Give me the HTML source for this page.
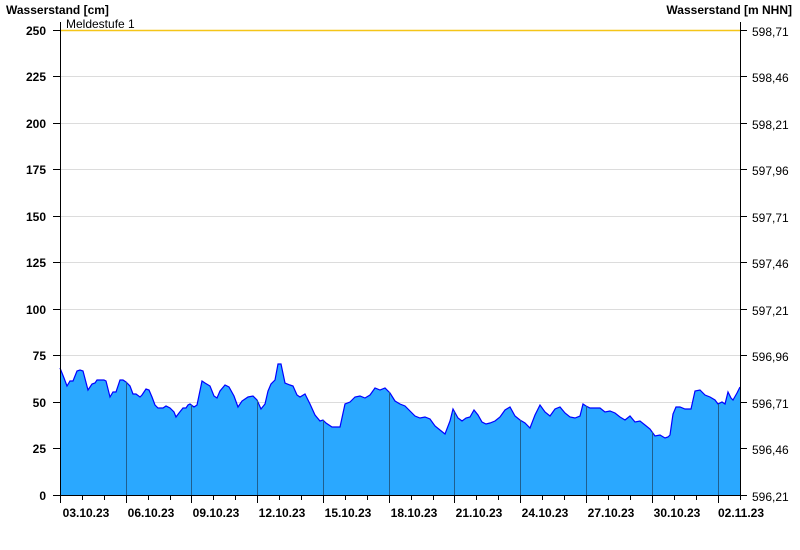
<!DOCTYPE html>
<html><head><meta charset="utf-8"><style>
html,body{margin:0;padding:0;background:#fff}
svg{display:block}
text{font-family:"Liberation Sans",Arial,sans-serif;font-size:12px;fill:#000}
.b{font-weight:bold}
.n{font-weight:normal}
</style></head><body>
<svg width="800" height="550" viewBox="0 0 800 550" xmlns="http://www.w3.org/2000/svg">
<text class="b" x="6" y="14" font-size="13">Wasserstand [cm]</text>
<text class="b" x="792" y="14" font-size="13" text-anchor="end">Wasserstand [m NHN]</text>
<g stroke="#dcdcdc" stroke-width="1">
<line x1="60" x2="740" y1="76.5" y2="76.5"/><line x1="60" x2="740" y1="123.5" y2="123.5"/>
<line x1="60" x2="740" y1="169.5" y2="169.5"/><line x1="60" x2="740" y1="216.5" y2="216.5"/>
<line x1="60" x2="740" y1="262.5" y2="262.5"/><line x1="60" x2="740" y1="309.5" y2="309.5"/>
<line x1="60" x2="740" y1="355.5" y2="355.5"/><line x1="60" x2="740" y1="402.5" y2="402.5"/>
<line x1="60" x2="740" y1="448.5" y2="448.5"/>
</g>
<line x1="60" x2="740" y1="30.5" y2="30.5" stroke="#f5c518" stroke-width="1.5"/>
<text class="n" x="66" y="28">Meldestufe 1</text>
<polygon fill="#2aa8ff" stroke="none" points="60,495 60,368 64,378 67,386 70,381 73,381 77,371 80,370 83,371 88,390 92,384 95,383 97,380 104,380 106,381 110,397 113,392 116,392 120,380 123,380 126,382 130,386 133,394 136,394 140,397 142,395 146,389 149,390 152,397 155,405 158,408 163,408 166,406 170,408 174,412 176,417 179,413 183,408 186,408 188,405 190,404 194,407 197,405 202,381 205,383 210,386 214,396 217,398 220,391 225,385 229,387 234,396 238,407 242,401 248,397 253,396 257,400 261,409 265,404 268,391 271,384 275,380 278,364 281,364 285,383 290,385 293,386 297,395 300,397 305,394 310,404 315,415 320,421 323,420 326,423 332,427 340,427 345,404 350,402 355,397 360,396 365,398 370,395 375,388 380,390 385,388 390,393 395,401 400,404 405,406 410,411 415,416 420,418 425,417 430,419 435,426 440,430 445,434 450,421 453,409 458,418 462,421 466,418 470,417 474,410 478,415 482,422 486,424 490,423 495,421 500,417 505,410 510,407 515,416 520,420 525,423 530,428 535,415 540,405 545,412 550,416 555,409 560,407 565,413 570,417 575,418 580,416 583,404 586,406 590,408 595,408 600,408 605,412 610,411 615,413 620,417 625,420 630,416 635,422 640,421 645,425 650,429 655,436 660,435 665,438 668,437 670,435 673,414 676,407 680,407 685,409 688,409 691,409 693,400 695,391 700,390 705,395 710,397 715,400 718,404 722,402 725,404 728,392 731,398 733,400 737,393 740,387 740,495"/>
<polyline fill="none" stroke="#0000ff" stroke-width="1.2" points="60,368 64,378 67,386 70,381 73,381 77,371 80,370 83,371 88,390 92,384 95,383 97,380 104,380 106,381 110,397 113,392 116,392 120,380 123,380 126,382 130,386 133,394 136,394 140,397 142,395 146,389 149,390 152,397 155,405 158,408 163,408 166,406 170,408 174,412 176,417 179,413 183,408 186,408 188,405 190,404 194,407 197,405 202,381 205,383 210,386 214,396 217,398 220,391 225,385 229,387 234,396 238,407 242,401 248,397 253,396 257,400 261,409 265,404 268,391 271,384 275,380 278,364 281,364 285,383 290,385 293,386 297,395 300,397 305,394 310,404 315,415 320,421 323,420 326,423 332,427 340,427 345,404 350,402 355,397 360,396 365,398 370,395 375,388 380,390 385,388 390,393 395,401 400,404 405,406 410,411 415,416 420,418 425,417 430,419 435,426 440,430 445,434 450,421 453,409 458,418 462,421 466,418 470,417 474,410 478,415 482,422 486,424 490,423 495,421 500,417 505,410 510,407 515,416 520,420 525,423 530,428 535,415 540,405 545,412 550,416 555,409 560,407 565,413 570,417 575,418 580,416 583,404 586,406 590,408 595,408 600,408 605,412 610,411 615,413 620,417 625,420 630,416 635,422 640,421 645,425 650,429 655,436 660,435 665,438 668,437 670,435 673,414 676,407 680,407 685,409 688,409 691,409 693,400 695,391 700,390 705,395 710,397 715,400 718,404 722,402 725,404 728,392 731,398 733,400 737,393 740,387"/>
<g stroke="#1f5f8f" stroke-width="1">
<line x1="126.5" x2="126.5" y1="382" y2="495"/><line x1="191.5" x2="191.5" y1="405" y2="495"/>
<line x1="257.5" x2="257.5" y1="400" y2="495"/><line x1="323.5" x2="323.5" y1="420" y2="495"/>
<line x1="389.5" x2="389.5" y1="392" y2="495"/><line x1="454.5" x2="454.5" y1="412" y2="495"/>
<line x1="520.5" x2="520.5" y1="420" y2="495"/><line x1="586.5" x2="586.5" y1="406" y2="495"/>
<line x1="652.5" x2="652.5" y1="432" y2="495"/><line x1="718.5" x2="718.5" y1="404" y2="495"/>
</g>
<g stroke="#000" stroke-width="1">
<line x1="60.5" x2="60.5" y1="22" y2="495"/>
<line x1="740.5" x2="740.5" y1="22" y2="495"/>
<line x1="60" x2="741" y1="495.5" y2="495.5"/>
<line x1="53" x2="60" y1="30.5" y2="30.5"/><line x1="53" x2="60" y1="76.5" y2="76.5"/>
<line x1="53" x2="60" y1="123.5" y2="123.5"/><line x1="53" x2="60" y1="169.5" y2="169.5"/>
<line x1="53" x2="60" y1="216.5" y2="216.5"/><line x1="53" x2="60" y1="262.5" y2="262.5"/>
<line x1="53" x2="60" y1="309.5" y2="309.5"/><line x1="53" x2="60" y1="355.5" y2="355.5"/>
<line x1="53" x2="60" y1="402.5" y2="402.5"/><line x1="53" x2="60" y1="448.5" y2="448.5"/>
<line x1="53" x2="60" y1="495.5" y2="495.5"/>
<line x1="740" x2="747" y1="30.5" y2="30.5"/><line x1="740" x2="747" y1="76.5" y2="76.5"/>
<line x1="740" x2="747" y1="123.5" y2="123.5"/><line x1="740" x2="747" y1="169.5" y2="169.5"/>
<line x1="740" x2="747" y1="216.5" y2="216.5"/><line x1="740" x2="747" y1="262.5" y2="262.5"/>
<line x1="740" x2="747" y1="309.5" y2="309.5"/><line x1="740" x2="747" y1="355.5" y2="355.5"/>
<line x1="740" x2="747" y1="402.5" y2="402.5"/><line x1="740" x2="747" y1="448.5" y2="448.5"/>
<line x1="740" x2="747" y1="495.5" y2="495.5"/>
<line x1="60.5" x2="60.5" y1="495" y2="503"/><line x1="82.5" x2="82.5" y1="495" y2="500"/><line x1="104.5" x2="104.5" y1="495" y2="500"/>
<line x1="126.5" x2="126.5" y1="495" y2="503"/><line x1="148.5" x2="148.5" y1="495" y2="500"/><line x1="170.5" x2="170.5" y1="495" y2="500"/>
<line x1="191.5" x2="191.5" y1="495" y2="503"/><line x1="213.5" x2="213.5" y1="495" y2="500"/><line x1="235.5" x2="235.5" y1="495" y2="500"/>
<line x1="257.5" x2="257.5" y1="495" y2="503"/><line x1="279.5" x2="279.5" y1="495" y2="500"/><line x1="301.5" x2="301.5" y1="495" y2="500"/>
<line x1="323.5" x2="323.5" y1="495" y2="503"/><line x1="345.5" x2="345.5" y1="495" y2="500"/><line x1="367.5" x2="367.5" y1="495" y2="500"/>
<line x1="389.5" x2="389.5" y1="495" y2="503"/><line x1="411.5" x2="411.5" y1="495" y2="500"/><line x1="433.5" x2="433.5" y1="495" y2="500"/>
<line x1="454.5" x2="454.5" y1="495" y2="503"/><line x1="476.5" x2="476.5" y1="495" y2="500"/><line x1="498.5" x2="498.5" y1="495" y2="500"/>
<line x1="520.5" x2="520.5" y1="495" y2="503"/><line x1="542.5" x2="542.5" y1="495" y2="500"/><line x1="564.5" x2="564.5" y1="495" y2="500"/>
<line x1="586.5" x2="586.5" y1="495" y2="503"/><line x1="608.5" x2="608.5" y1="495" y2="500"/><line x1="630.5" x2="630.5" y1="495" y2="500"/>
<line x1="652.5" x2="652.5" y1="495" y2="503"/><line x1="674.5" x2="674.5" y1="495" y2="500"/><line x1="696.5" x2="696.5" y1="495" y2="500"/>
<line x1="718.5" x2="718.5" y1="495" y2="503"/><line x1="740.5" x2="740.5" y1="495" y2="500"/>
</g>
<g text-anchor="end" class="b">
<text class="b" x="46" y="35">250</text><text class="b" x="46" y="81">225</text><text class="b" x="46" y="128">200</text>
<text class="b" x="46" y="174">175</text><text class="b" x="46" y="221">150</text><text class="b" x="46" y="267">125</text>
<text class="b" x="46" y="314">100</text><text class="b" x="46" y="360">75</text><text class="b" x="46" y="407">50</text>
<text class="b" x="46" y="453">25</text><text class="b" x="46" y="500">0</text>
</g>
<g>
<text x="752" y="36">598,71</text><text x="752" y="82">598,46</text><text x="752" y="129">598,21</text>
<text x="752" y="175">597,96</text><text x="752" y="222">597,71</text><text x="752" y="268">597,46</text>
<text x="752" y="315">597,21</text><text x="752" y="361">596,96</text><text x="752" y="408">596,71</text>
<text x="752" y="454">596,46</text><text x="752" y="501">596,21</text>
</g>
<g text-anchor="middle">
<text class="b" x="86" y="517">03.10.23</text><text class="b" x="151" y="517">06.10.23</text><text class="b" x="216" y="517">09.10.23</text>
<text class="b" x="282" y="517">12.10.23</text><text class="b" x="348" y="517">15.10.23</text><text class="b" x="414" y="517">18.10.23</text>
<text class="b" x="479" y="517">21.10.23</text><text class="b" x="545" y="517">24.10.23</text><text class="b" x="611" y="517">27.10.23</text>
<text class="b" x="677" y="517">30.10.23</text><text class="b" x="741" y="517">02.11.23</text>
</g>
</svg>
</body></html>
